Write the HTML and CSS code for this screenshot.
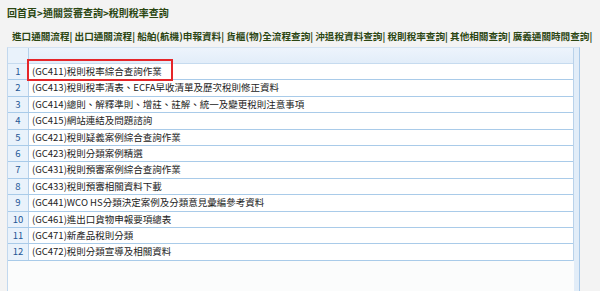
FILE: index.html
```html
<!DOCTYPE html>
<html lang="zh-Hant">

<head>
    <meta charset="UTF-8">
    <meta name="viewport" content="width=device-width, initial-scale=1.0">
    <title>稅則稅率查詢</title>

    <link rel="stylesheet" href="styles.css">
</head>

<body>
    <div class="crumb">
        <a href="#home">回首頁</a>&gt;<a href="#query">通關簽審查詢</a>&gt;<span>稅則稅率查詢</span>
    </div>

    <div class="nav">
        <a href="#">進口通關流程</a>| <a href="#">出口通關流程</a>| <a href="#">船舶(航機)申報資料</a>| <a href="#">貨櫃(物)全流程查詢</a>| <a href="#">沖退稅資料查詢</a>| <a href="#">稅則稅率查詢</a>| <a href="#">其他相關查詢</a>| <a href="#">廣義通關時間查詢</a>|
    </div>

    <div class="panel">
        <div class="list">
            <div class="row head">
                <div class="num"></div>
                <div class="item"></div>
            </div>
            <div class="row">
                <div class="num">1</div>
                <div class="item"><span class="mark">(GC411)稅則稅率綜合查詢作業</span></div>
            </div>
            <div class="row">
                <div class="num">2</div>
                <div class="item">(GC413)稅則稅率清表、ECFA早收清單及歷次稅則修正資料</div>
            </div>
            <div class="row">
                <div class="num">3</div>
                <div class="item">(GC414)總則、解釋準則、增註、註解、統一及變更稅則注意事項</div>
            </div>
            <div class="row">
                <div class="num">4</div>
                <div class="item">(GC415)網站連結及問題諮詢</div>
            </div>
            <div class="row">
                <div class="num">5</div>
                <div class="item">(GC421)稅則疑義案例綜合查詢作業</div>
            </div>
            <div class="row">
                <div class="num">6</div>
                <div class="item">(GC423)稅則分類案例精選</div>
            </div>
            <div class="row">
                <div class="num">7</div>
                <div class="item">(GC431)稅則預審案例綜合查詢作業</div>
            </div>
            <div class="row">
                <div class="num">8</div>
                <div class="item">(GC433)稅則預審相關資料下載</div>
            </div>
            <div class="row">
                <div class="num">9</div>
                <div class="item">(GC441)WCO HS分類決定案例及分類意見彙編參考資料</div>
            </div>
            <div class="row">
                <div class="num">10</div>
                <div class="item">(GC461)進出口貨物申報要項總表</div>
            </div>
            <div class="row">
                <div class="num">11</div>
                <div class="item">(GC471)新產品稅則分類</div>
            </div>
            <div class="row">
                <div class="num">12</div>
                <div class="item">(GC472)稅則分類宣導及相關資料</div>
            </div>
        </div>
        <div class="strip"></div>
    </div>
</body>

</html>
```

FILE: styles.css
```css
body {
    font-family: "Noto Sans CJK TC", "Noto Sans", sans-serif;
    margin: 0;
    padding: 0;
    background-color: #f3f3f3;
    height: 291px;
    overflow: hidden;
}

a {
    color: inherit;
    text-decoration: none;
}

.crumb {
    height: 25px;
    line-height: 25px;
    padding-left: 7px;
    font-size: 10px;
    color: #2b4612;
    font-weight: bold;
}

.nav {
    height: 22px;
    line-height: 22px;
    padding-left: 12px;
    font-size: 9.6px;
    color: #2b4612;
    font-weight: bold;
    white-space: nowrap;
}

.panel {
    display: flex;
    margin-left: 7px;
    width: 571px;
    height: 250px;
    background-color: #fbfcfc;
    border-left: 1px solid #c2d8ee;
    border-right: 1px solid #a9c9e8;
    border-top: 1px solid #d4e3f2;
}

.list {
    flex: 1;
    border-right: 1px solid #b9d2ea;
    align-self: flex-start;
}

.strip {
    width: 5px;
    background-color: #e2edf8;
}

.row {
    display: flex;
    height: 15.4px;
    line-height: 15.4px;
    border-bottom: 1px solid #a9cbe9;
    background-color: #fff;
    font-size: 9.5px;
}

.row.head {
    height: 15px;
    background: linear-gradient(#edf4fc, #e2edf9);
    border-bottom: 1px solid #c6dbef;
}

.num {
    width: 20px;
    flex-shrink: 0;
    text-align: center;
    color: #1f5796;
    background-color: #e9f2fb;
    border-right: 1px solid #b5d0ea;
}

.item {
    padding-left: 3px;
    color: #222;
    white-space: nowrap;
}

.mark {
    position: relative;
}

.mark::after {
    content: "";
    position: absolute;
    left: -5px;
    top: -5px;
    width: 142px;
    height: 18px;
    border: 2px solid #e5262a;
}
```
